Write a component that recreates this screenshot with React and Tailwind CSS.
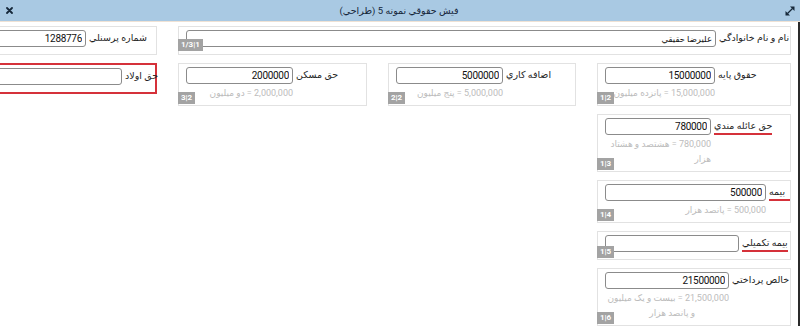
import React from "react";

function Badge({ children, bottom }) {
  return (
    <span
      dir="ltr"
      className={`absolute left-[-1px] ${bottom} h-[12px] px-[3px] bg-[#a3a3a3] text-white text-[8px] leading-[12px] font-bold whitespace-nowrap`}
    >
      {children}
    </span>
  );
}

function Card({
  pos,
  label,
  value = "",
  w,
  helper,
  line2,
  badge,
  badgeBottom = "bottom-[1px]",
  underline,
  red,
  labelExtra = "",
  valueCls = "text-[10px] tracking-[-0.3px]",
}) {
  const border = red ? "border-2 border-[#d5313a]" : "border border-[#e2e2e2]";
  const pb = helper ? "pb-[4px]" : "pb-[7px]";
  return (
    <div className={`relative bg-white ${border} ${pos} pl-[7px] pt-[3px] ${pb}`}>
      <div dir="ltr" className="flex justify-start items-start">
        <div dir="rtl" className={`${w} shrink-0`}>
          <input
            readOnly
            dir="rtl"
            value={value}
            className={`block w-full h-[17px] border border-[#8b8b8b] rounded-[3px] px-[3px] text-right ${valueCls} text-[#111] bg-white outline-none`}
          />
          {helper && (
            <div className="pt-[2px] text-[9px] leading-[15px] text-[#bcbcbc] text-right">
              {helper}
            </div>
          )}
          {line2 && (
            <div className="text-[9px] leading-[15px] text-[#bcbcbc] text-right pr-[34px]">
              {line2}
            </div>
          )}
        </div>
        <div
          dir="rtl"
          className={`shrink-0 ml-[3px] text-left text-[9.5px] leading-[15px] h-[17px] text-[#1e1e1e] whitespace-nowrap ${
            underline ? "border-b-2 border-[#d5313a]" : ""
          } ${labelExtra}`}
        >
          {label}
        </div>
      </div>
      {badge && <Badge bottom={badgeBottom}>{badge}</Badge>}
    </div>
  );
}

export default function App() {
  return (
    <div className="w-[800px] h-[326px] overflow-hidden bg-white font-['Roboto','DejaVu_Sans',sans-serif]">
      <div className="h-[22px] bg-[#a9c9e3] border-b border-[#efe2d5] flex items-center justify-between pl-[6px] pr-[5px]">
        <svg width="7" height="7" viewBox="0 0 7 7">
          <path d="M1 1L6 6M6 1L1 6" stroke="#16283a" strokeWidth="1.8" strokeLinecap="round" />
        </svg>
        <span dir="rtl" className="text-[9.5px] text-[#15263a] leading-none">
          فيش حقوقي نمونه 5 (طراحي)
        </span>
        <svg width="10" height="10" viewBox="0 0 10 10">
          <path d="M2.5 7.5L7.5 2.5" stroke="#16283a" strokeWidth="1.3" />
          <path d="M9.5 0.5L9.5 5L5 0.5Z" fill="#16283a" />
          <path d="M0.5 9.5L0.5 5L5 9.5Z" fill="#16283a" />
        </svg>
      </div>
      <div className="h-[304px] border-r-2 border-[#2a2a2a] overflow-hidden">
        <div
          dir="rtl"
          className="grid grid-cols-[194px_188px_189px_188px] gap-x-[21px] gap-y-[8px] items-start pt-[4px] pr-[7px]"
        >
          <Card
            pos="col-start-1 col-span-3 row-start-1"
            label="نام و نام خانوادگي"
            value="عليرضا حقيقي"
            w="w-[530px]"
            badge="1/3|1"
            badgeBottom="bottom-[3px]"
            valueCls="text-[8.5px]"
          />
          <Card
            pos="col-start-4 row-start-1"
            label="شماره پرسنلي"
            value="1288776"
            w="w-[109px]"
          />
          <Card
            pos="col-start-1 row-start-2"
            label="حقوق پايه"
            value="15000000"
            w="w-[110px]"
            helper="15,000,000 = پانزده ميليون"
            badge="1|2"
          />
          <Card
            pos="col-start-2 row-start-2"
            label="اضافه كاري"
            value="5000000"
            w="w-[107px]"
            helper="5,000,000 = پنج ميليون"
            badge="2|2"
          />
          <Card
            pos="col-start-3 row-start-2"
            label="حق مسكن"
            value="2000000"
            w="w-[107px]"
            helper="2,000,000 = دو ميليون"
            badge="3|2"
          />
          <Card
            pos="col-start-4 row-start-2"
            label="حق اولاد"
            value=""
            w="w-[144px]"
            red
          />
          <Card
            pos="col-start-1 row-start-3"
            label="حق عائله مندي"
            value="780000"
            w="w-[106px]"
            helper="780,000 = هشتصد و هشتاد هزار"
            badge="1|3"
            underline
          />
          <Card
            pos="col-start-1 row-start-4"
            label="بيمه"
            value="500000"
            w="w-[161px]"
            helper="500,000 = پانصد هزار"
            badge="1|4"
            underline
            labelExtra="min-w-[21px]"
          />
          <Card
            pos="col-start-1 row-start-5"
            label="بيمه تكميلي"
            value=""
            w="w-[134px]"
            badge="1|5"
            underline
          />
          <Card
            pos="col-start-1 row-start-6"
            label="خالص پرداختي"
            value="21500000"
            w="w-[124px]"
            helper="21,500,000 = بيست و يک ميليون"
            line2="و پانصد هزار"
            badge="1|6"
          />
        </div>
      </div>
    </div>
  );
}
